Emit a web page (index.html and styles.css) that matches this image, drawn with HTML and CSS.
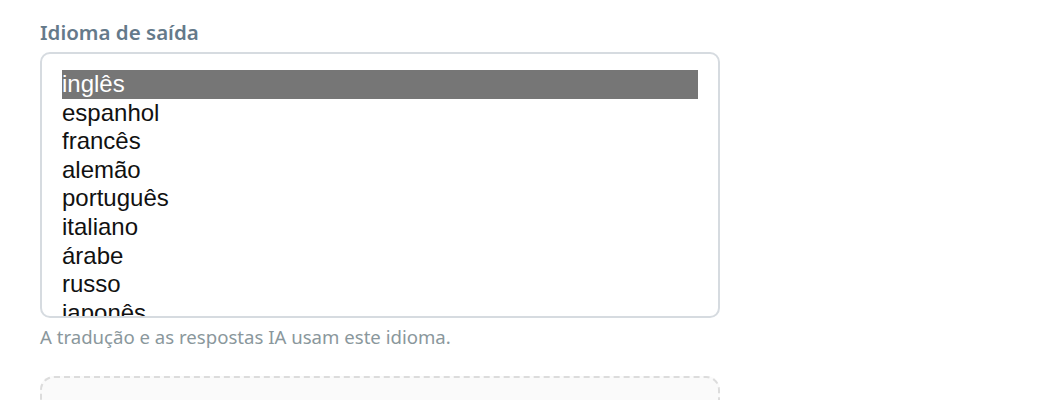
FILE: index.html
```html
<!DOCTYPE html>
<html lang="pt">
<head>
<meta charset="utf-8">
<title>Idioma de saída</title>
<link rel="stylesheet" href="styles.css">
</head>
<body>
<div class="page">
  <div class="field">
    <label class="field-label" for="lang">Idioma de saída</label>
    <select id="lang" class="lang-list" multiple>
      <option selected>inglês</option>
      <option>espanhol</option>
      <option>francês</option>
      <option>alemão</option>
      <option>português</option>
      <option>italiano</option>
      <option>árabe</option>
      <option>russo</option>
      <option>japonês</option>
      <option>chinês</option>
      <option>coreano</option>
      <option>hindi</option>
    </select>
    <p class="field-hint">A tradução e as respostas IA usam este idioma.</p>
  </div>
  <div class="dropzone"></div>
</div>
</body>
</html>
```
FILE: styles.css
```css
html, body {
  margin: 0;
  padding: 0;
  background: #ffffff;
}
body {
  font-family: "Noto Sans", "Open Sans", sans-serif;
}
.page {
  padding: 20px 40px 0 40px;
  width: 680px;
}
.field {
  display: flex;
  flex-direction: column;
}
.field-label {
  font-size: 20.5px;
  font-weight: 600;
  color: #657a8a;
  line-height: 24px;
  margin-bottom: 8px;
}
.lang-list {
  box-sizing: border-box;
  width: 680px;
  height: 266px;
  border: 2px solid #d6dbe0;
  border-radius: 10px;
  padding: 16px 20px;
  font-family: "Liberation Sans", Arial, sans-serif;
  font-size: 24px;
  color: #111111;
  background: #ffffff;
  outline: none;
  scrollbar-width: none;
  overflow: hidden;
}
.lang-list option {
  padding: 0;
  line-height: 28.6px;
  min-height: 28.6px;
}
.lang-list option:checked {
  background: #767676 linear-gradient(#767676, #767676);
  color: #ffffff;
}
.field-hint {
  margin: 7px 0 0 0;
  font-size: 18.6px;
  line-height: 24px;
  color: #8a979c;
}
.dropzone {
  box-sizing: border-box;
  margin-top: 27px;
  height: 80px;
  border: 2px dashed #dcdcdc;
  border-radius: 14px;
  background: #fafafa;
}
```
